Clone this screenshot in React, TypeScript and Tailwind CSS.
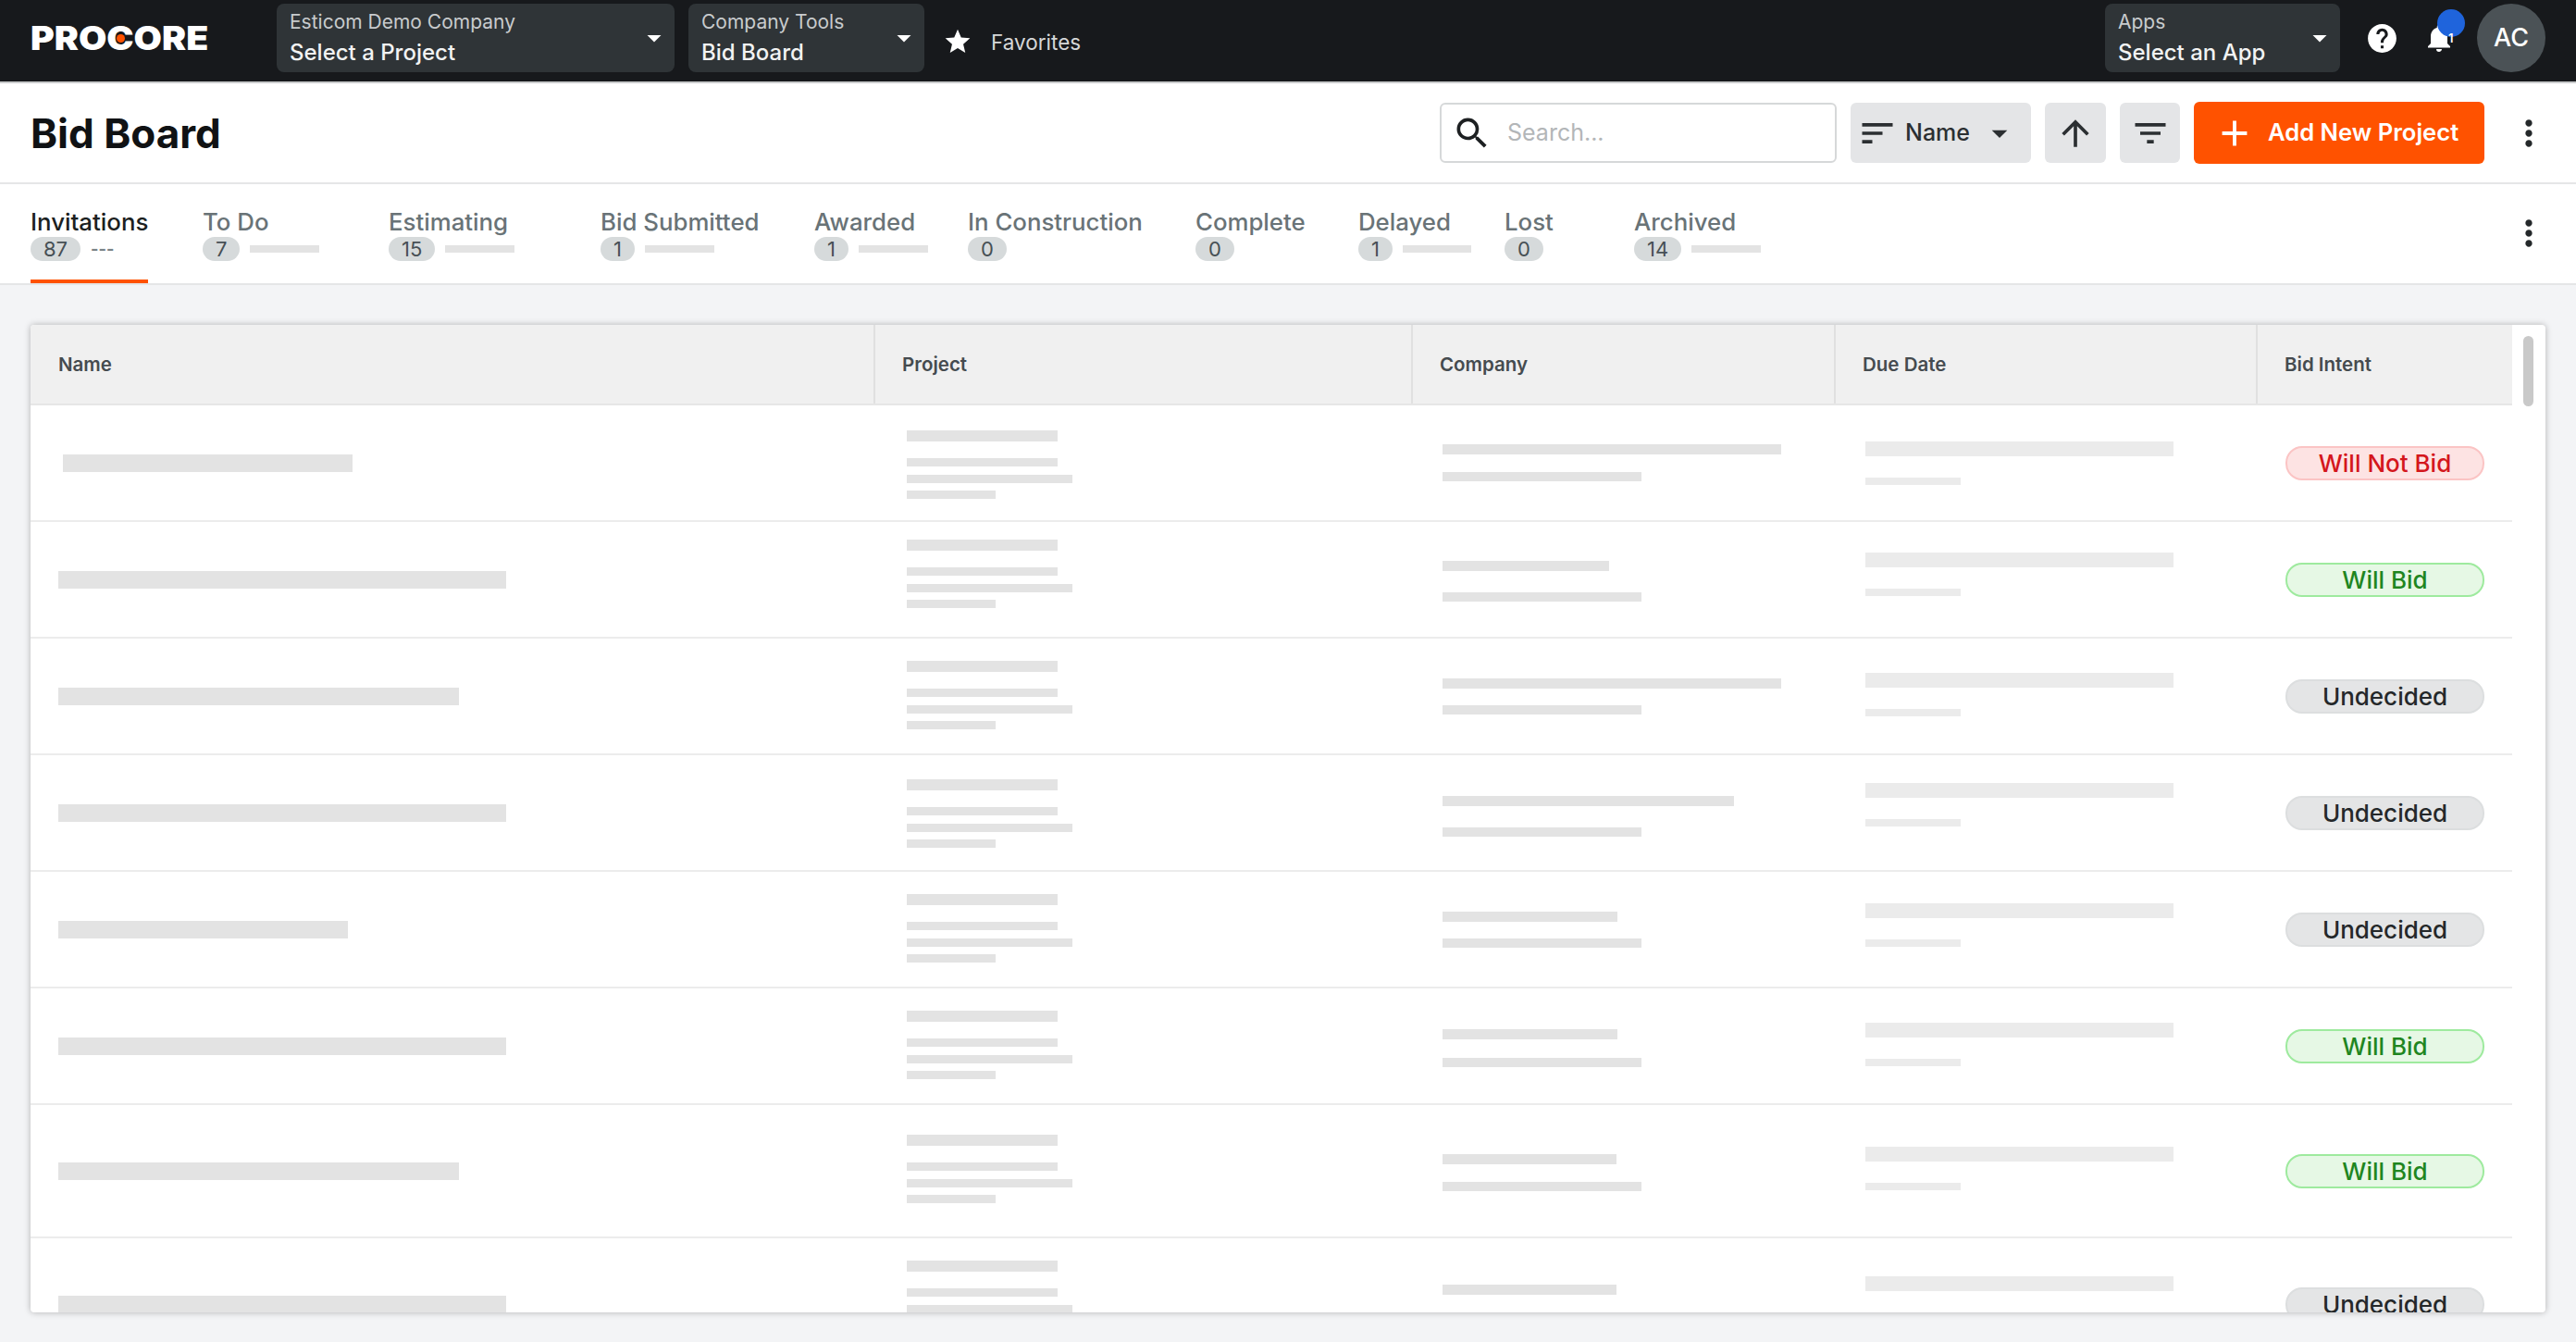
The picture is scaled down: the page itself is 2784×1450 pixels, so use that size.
import {
  MdAdd,
  MdArrowDropDown,
  MdArrowUpward,
  MdFilterList,
  MdHelp,
  MdMoreVert,
  MdNotifications,
  MdSearch,
  MdSort,
  MdStar,
} from 'react-icons/md';

const tabs = [
  { label: 'Invitations', count: '87', slot: 'w-[186px]', bar: '', active: true },
  { label: 'To Do', count: '7', slot: 'w-[201px]', bar: 'w-[75px]' },
  { label: 'Estimating', count: '15', slot: 'w-[229px]', bar: 'w-[75px]' },
  { label: 'Bid Submitted', count: '1', slot: 'w-[231px]', bar: 'w-[75px]' },
  { label: 'Awarded', count: '1', slot: 'w-[166px]', bar: 'w-[75px]' },
  { label: 'In Construction', count: '0', slot: 'w-[246px]', bar: '' },
  { label: 'Complete', count: '0', slot: 'w-[176px]', bar: '' },
  { label: 'Delayed', count: '1', slot: 'w-[158px]', bar: 'w-[74px]' },
  { label: 'Lost', count: '0', slot: 'w-[140px]', bar: '' },
  { label: 'Archived', count: '14', slot: 'w-[200px]', bar: 'w-[75px]' },
];

const rows = [
  { h: 'h-[126px]', name: 'ml-[35px] w-[313px]', project: 'mt-[27px]', co1: 'mt-[42px] w-[366px]', co2: 'mt-[19px]', due: 'mt-[39px]', intent: 'no' },
  { h: 'h-[126px]', name: 'ml-[30px] w-[484px]', project: 'mt-[19px]', co1: 'mt-[42px] w-[180px]', co2: 'mt-[23px]', due: 'mt-[33px]', intent: 'yes' },
  { h: 'h-[126px]', name: 'ml-[30px] w-[433px]', project: 'mt-[24px]', co1: 'mt-[43px] w-[366px]', co2: 'mt-[18px]', due: 'mt-[37px]', intent: 'maybe' },
  { h: 'h-[126px]', name: 'ml-[30px] w-[484px]', project: 'mt-[26px]', co1: 'mt-[44px] w-[315px]', co2: 'mt-[23px]', due: 'mt-[30px]', intent: 'maybe' },
  { h: 'h-[126px]', name: 'ml-[30px] w-[313px]', project: 'mt-[24px]', co1: 'mt-[43px] w-[189px]', co2: 'mt-[18px]', due: 'mt-[34px]', intent: 'maybe' },
  { h: 'h-[126px]', name: 'ml-[30px] w-[484px]', project: 'mt-[24px]', co1: 'mt-[44px] w-[189px]', co2: 'mt-[20px]', due: 'mt-[37px]', intent: 'yes' },
  { h: 'h-[144px]', name: 'ml-[30px] w-[433px]', project: 'mt-[32px]', co1: 'mt-[53px] w-[188px]', co2: 'mt-[19px]', due: 'mt-[45px]', intent: 'yes' },
  { h: 'h-[144px]', name: 'ml-[30px] w-[484px]', project: 'mt-[24px]', co1: 'mt-[50px] w-[188px]', co2: 'mt-[19px]', due: 'mt-[41px]', intent: 'maybe' },
];

const pills: Record<string, { text: string; cls: string }> = {
  no: { text: 'Will Not Bid', cls: 'bg-[#fde3e3] border-[#fbc4c4] text-[#d4161c]' },
  yes: { text: 'Will Bid', cls: 'bg-[#e6f8e5] border-[#9eea9e] text-[#1f861f]' },
  maybe: { text: 'Undecided', cls: 'bg-[#e4e5e6] border-[#dcdedf] text-[#24282a]' },
};

const columns = [
  { label: 'Name', cls: 'w-[913px] pl-[30px]' },
  { label: 'Project', cls: 'w-[581px] pl-[29px]' },
  { label: 'Company', cls: 'w-[457px] pl-[29px]' },
  { label: 'Due Date', cls: 'w-[456px] pl-[29px]' },
  { label: 'Bid Intent', cls: 'w-[275px] pl-[29px]' },
];

const NavSelect = ({ label, value, cls }: { label: string; value: string; cls: string }) => (
  <div className={`relative h-[74px] rounded-lg bg-[#2f3437] pl-[14px] pt-[6px] ${cls}`}>
    <div className="text-[21px] leading-[28px] text-[#c8cbcd]">{label}</div>
    <div className="mt-[3px] text-[24px] leading-[32px] font-medium text-[#f2f3f3]">{value}</div>
    <MdArrowDropDown className="absolute right-[4px] top-[19px] text-white" size={36} />
  </div>
);

const Skeleton = ({ cls }: { cls: string }) => <div className={`bg-[#e3e3e3] ${cls}`} />;

export default function App() {
  return (
    <div className="flex h-[1450px] flex-col overflow-hidden bg-[#f3f4f6] font-['Inter',sans-serif]">
      {/* top nav */}
      <div className="flex h-[90px] shrink-0 items-center border-b-2 border-[#c9cbcc] bg-[#17191c] pb-[6px]">
        <div className="relative ml-[33px] w-[193px] whitespace-nowrap text-[35px] leading-none font-black text-white">
          <span className="inline-block origin-left scale-x-[1.12]">PROCORE</span>
          <span className="absolute left-[93px] top-[13px] h-[9px] w-[9px] rounded-full bg-[#ff5200]" />
        </div>
        <NavSelect label="Esticom Demo Company" value="Select a Project" cls="ml-[73px] w-[430px]" />
        <NavSelect label="Company Tools" value="Bid Board" cls="ml-[15px] w-[255px]" />
        <MdStar className="ml-[20px] mt-[8px] text-white" size={32} />
        <span className="ml-[20px] mt-[10px] text-[22.5px] text-[#d5d7d8]">Favorites</span>

        <NavSelect label="Apps" value="Select an App" cls="ml-auto w-[254px]" />
        <MdHelp className="ml-[27px] text-white" size={37} />
        <div className="relative ml-[25px] h-[36px] w-[36px]">
          <MdNotifications className="text-white" size={36} />
          <span className="absolute left-[16px] top-[-13px] h-[30px] w-[30px] rounded-full bg-[#1f64dc]" />
          <span className="absolute left-[28px] top-[12px] text-[13px] leading-none font-semibold text-white">1</span>
        </div>
        <div className="ml-[23px] mr-[33px] flex h-[74px] w-[74px] items-center justify-center rounded-full bg-[#4b5256] text-[27px] font-medium text-white">
          AC
        </div>
      </div>

      {/* title and toolbar */}
      <div className="flex h-[109px] shrink-0 items-center border-b-2 border-[#e5e6e7] bg-white pl-[33px]">
        <h1 className="text-[44px] font-bold text-[#101214]">Bid Board</h1>
        <div className="ml-auto flex h-[65px] w-[429px] items-center rounded-md border-2 border-[#d6d8d9] bg-white pl-[11px]">
          <MdSearch className="text-[#1d2022]" size={44} />
          <span className="ml-[16px] text-[25px] text-[#b3b6b8]">Search...</span>
        </div>
        <div className="ml-[15px] flex h-[65px] w-[195px] items-center rounded-md bg-[#e4e5e7] pl-[7px] text-[#2b2f32]">
          <MdSort size={44} />
          <span className="ml-[8px] text-[25px] font-medium">Name</span>
          <MdArrowDropDown className="ml-[12px]" size={40} />
        </div>
        <div className="ml-[15px] flex h-[65px] w-[66px] items-center justify-center rounded-md bg-[#e4e5e7] text-[#2b2f32]">
          <MdArrowUpward size={44} />
        </div>
        <div className="ml-[15px] flex h-[65px] w-[65px] items-center justify-center rounded-md bg-[#e4e5e7] text-[#2b2f32]">
          <MdFilterList size={44} />
        </div>
        <div className="ml-[15px] flex h-[67px] w-[314px] items-center rounded-md bg-[#ff5200] pl-[21px] text-white">
          <MdAdd size={46} />
          <span className="ml-[13px] text-[25.6px] font-semibold">Add New Project</span>
        </div>
        <MdMoreVert className="ml-[26px] mr-[29px] text-[#24282a]" size={44} />
      </div>

      {/* tabs */}
      <div className="flex h-[109px] shrink-0 border-b-2 border-[#e5e6e7] bg-white pl-[33px]">
        {tabs.map((tab) => (
          <div key={tab.label} className={`shrink-0 ${tab.slot}`}>
            <div className={`h-full w-fit pt-[25px] ${tab.active ? 'border-b-4 border-[#ff5200]' : ''}`}>
              <div className={`whitespace-nowrap text-[25.8px] leading-[32px] font-medium ${tab.active ? 'text-[#1c1f21]' : 'text-[#697377]'}`}>
                {tab.label}
              </div>
              <div className="flex items-center">
                <span className="rounded-full bg-[#d6dadb] px-[14px] text-[22px] leading-[26px] text-[#475055]">{tab.count}</span>
                {tab.active && <span className="ml-[11px] text-[18px] leading-none font-bold text-[#7a8387]">---</span>}
                {tab.bar && <span className={`ml-[11px] h-[8px] bg-[#e3e3e3] ${tab.bar}`} />}
              </div>
            </div>
          </div>
        ))}
        <MdMoreVert className="ml-auto mr-[29px] mt-[31px] text-[#24282a]" size={44} />
      </div>

      {/* bid table */}
      <div className="ml-[33px] mt-[43px] flex h-[1067px] w-[2718px] overflow-hidden rounded-sm bg-white shadow-[0_0_7px_rgba(0,0,0,0.28)]">
        <div className="w-[2682px] shrink-0">
          <div className="flex h-[87px] border-b-2 border-[#e6e6e6] bg-[#f0f0f0]">
            {columns.map((col, i) => (
              <div
                key={col.label}
                className={`flex items-center pt-[2px] text-[20.5px] font-semibold text-[#454b4f] ${col.cls} ${i < 4 ? 'border-r-2 border-[#e0e0e0]' : ''}`}
              >
                {col.label}
              </div>
            ))}
          </div>
          {rows.map((row, i) => (
            <div key={i} className={`flex border-b-2 border-[#ececec] ${row.h}`}>
              <div className="flex w-[912px] items-center">
                <Skeleton cls={`h-[19px] ${row.name}`} />
              </div>
              <div className={`ml-[35px] w-[546px] ${row.project}`}>
                <Skeleton cls="h-[12px] w-[163px]" />
                <Skeleton cls="mt-[18px] h-[9px] w-[163px]" />
                <Skeleton cls="mt-[9px] h-[9px] w-[179px]" />
                <Skeleton cls="mt-[8px] h-[9px] w-[96px]" />
              </div>
              <div className="ml-[33px] w-[424px]">
                <Skeleton cls={`h-[11px] ${row.co1}`} />
                <Skeleton cls={`h-[10px] w-[215px] ${row.co2}`} />
              </div>
              <div className="ml-[33px] w-[423px]">
                <div className={`h-[16px] w-[333px] bg-[#ebebeb] ${row.due}`} />
                <div className="mt-[23px] h-[8px] w-[103px] bg-[#ebebeb]" />
              </div>
              <div className="flex w-[276px] items-center pl-[31px]">
                <div className={`flex h-[37px] w-[215px] items-center justify-center rounded-[18px] border-2 text-[26px] font-medium ${pills[row.intent].cls}`}>
                  {pills[row.intent].text}
                </div>
              </div>
            </div>
          ))}
        </div>
        <div className="w-[36px] shrink-0 pl-[12px] pt-[12px]">
          <div className="h-[76px] w-[11px] rounded-full bg-[#c9c9c9]" />
        </div>
      </div>
    </div>
  );
}
